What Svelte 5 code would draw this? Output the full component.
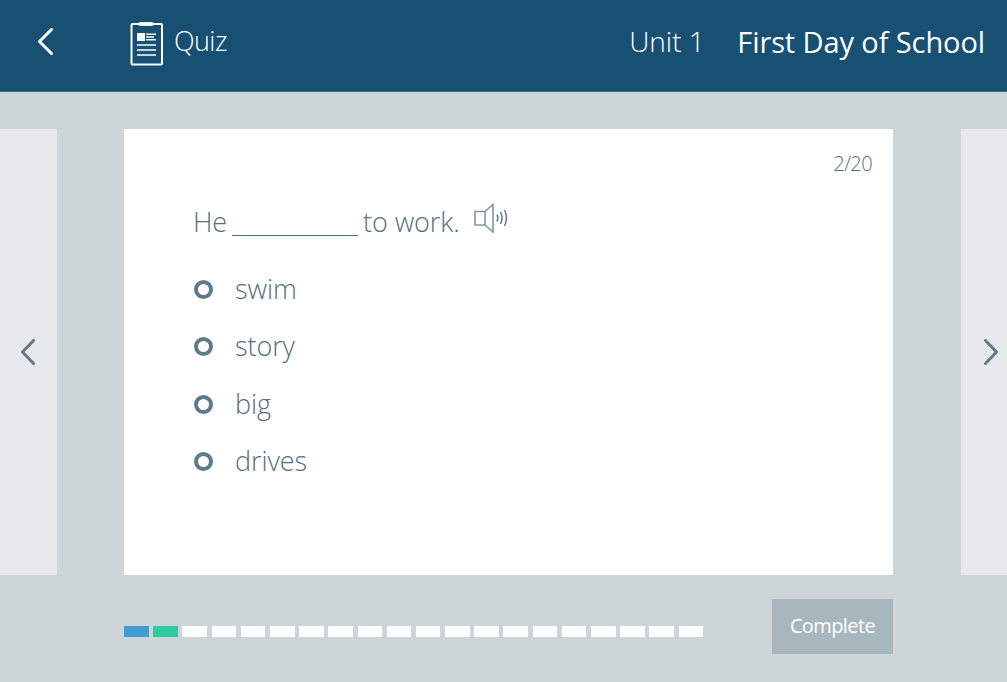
<script>
    const options = ['swim', 'story', 'big', 'drives'];
    const segments = Array.from({ length: 20 }, (_, i) => (i === 0 ? 'blue' : i === 1 ? 'green' : ''));
</script>

<div class="page">
    <header class="top">
        <button class="back" aria-label="Back">
            <svg width="18" height="30" viewBox="0 0 18 30"><path d="M15.5 2.5 L3.5 14.5 L15.5 26.5" fill="none" stroke="#fff" stroke-width="3" stroke-linecap="round" stroke-linejoin="round"/></svg>
        </button>
        <svg class="quiz-icon" width="34" height="44" viewBox="0 0 34 44">
            <rect x="1.5" y="2" width="30.5" height="40.5" rx="1" fill="none" stroke="#fff" stroke-width="2"/>
            <rect x="9" y="0" width="14" height="4" rx="1" fill="#fff" opacity="0.9"/>
            <rect x="7" y="11" width="8" height="8" fill="#fff"/>
            <path d="M16 12.3 H26 M16 15 H24 M16 17.8 H26 M7 23 H26 M7 28 H26 M7 33 H26" stroke="#fff" stroke-width="1.6" fill="none"/>
        </svg>
        <span class="quiz">Quiz</span>
        <span class="unit">Unit 1</span>
        <span class="title">First Day of School</span>
    </header>

    <main class="stage">
        <div class="side left">
            <svg width="16" height="26" viewBox="0 0 16 26"><path d="M13.5 1.5 L2.5 13 L13.5 24.5" fill="none" stroke="#5f7a8a" stroke-width="3" stroke-linecap="round" stroke-linejoin="round"/></svg>
        </div>
        <section class="card">
            <div class="count">2/20</div>
            <div class="question">
                <span>He</span>
                <span class="blank"></span>
                <span>to work.</span>
                <svg class="speaker" width="36" height="30" viewBox="0 0 36 30">
                    <path d="M1 8.5 H11 V22 H1 Z M11 8.5 L19 1.5 V29 L11 22" fill="none" stroke="#7f97a5" stroke-width="1.6"/>
                    <path d="M23 11.5 Q24.8 15 23 18.5 M26.5 9 Q29.5 15 26.5 21 M30.5 7 Q34.5 15 30.5 23" fill="none" stroke="#5f7a8a" stroke-width="1.5"/>
                </svg>
            </div>
            <ul class="options">
                {#each options as option}
                    <li><span class="radio"></span><span class="label">{option}</span></li>
                {/each}
            </ul>
        </section>
        <div class="side right">
            <svg width="16" height="26" viewBox="0 0 16 26"><path d="M2.5 1.5 L13.5 13 L2.5 24.5" fill="none" stroke="#5f7a8a" stroke-width="3" stroke-linecap="round" stroke-linejoin="round"/></svg>
        </div>
    </main>

    <footer class="bottom">
        <div class="progress">
            {#each segments as seg}
                <span class="seg {seg}"></span>
            {/each}
        </div>
        <button class="complete">Complete</button>
    </footer>
</div>

<style>
    :global(body) {
        margin: 0;
        background: #ced5d8;
    }

    .page {
        width: 1007px;
        height: 682px;
        overflow: hidden;
        background: #ced5d8;
        font-family: "Open Sans", "Noto Sans", sans-serif;
    }

    .top {
        height: 92px;
        box-sizing: border-box;
        background: #175072;
        border-bottom: 1px solid #3c6b88;
        color: #fff;
        display: flex;
        align-items: center;
        padding: 0 22px 0 36px;
    }

    .back {
        background: none;
        border: 0;
        padding: 0;
        width: 94px;
        height: 30px;
        margin-top: -8px;
        text-align: left;
    }

    .quiz-icon {
        margin-top: -3px;
    }

    .quiz {
        margin-left: 10px;
        margin-top: -10px;
        font-size: 27px;
        font-weight: 300;
        letter-spacing: -0.6px;
    }

    .unit {
        margin-left: auto;
        font-size: 28px;
        font-weight: 300;
        letter-spacing: 0;
        margin-top: -9px;
    }

    .title {
        margin-left: 32.5px;
        font-size: 29px;
        font-weight: 400;
        letter-spacing: -0.1px;
        margin-top: -9px;
    }

    .stage {
        margin-top: 37px;
        height: 446px;
        display: grid;
        grid-template-columns: 57px 1fr 46px;
    }

    .side {
        background: #e6eaed;
        display: flex;
        align-items: center;
        box-sizing: border-box;
    }

    .side.left {
        padding-left: 20px;
    }

    .side.right {
        padding-left: 22px;
    }

    .card {
        background: #fff;
        color: #557080;
        margin: 0 68px 0 67px;
        padding: 21px 21px 0 69px;
        box-sizing: border-box;
    }

    .count {
        text-align: right;
        font-size: 20px;
        line-height: 28px;
        font-weight: 300;
        letter-spacing: -0.6px;
    }

    .question {
        display: flex;
        align-items: center;
        margin-top: 23px;
        height: 40px;
        font-size: 27px;
        font-weight: 300;
        letter-spacing: -0.1px;
    }

    .blank {
        width: 126px;
        height: 0;
        border-bottom: 1.5px solid #557080;
        margin: 28px 5px 0 5px;
    }

    .speaker {
        margin: -6px 0 0 14px;
    }

    .options {
        list-style: none;
        margin: 20px 0 0;
        padding: 0;
    }

    .options li {
        display: flex;
        align-items: center;
        height: 57.3px;
        font-size: 27px;
        font-weight: 300;
        letter-spacing: -0.1px;
    }

    .label {
        margin-top: -2px;
    }

    .radio {
        width: 19px;
        height: 19px;
        box-sizing: border-box;
        border: 4px solid #5f7a8a;
        border-radius: 50%;
        margin: 0 22px 0 1px;
    }

    .bottom {
        display: flex;
        justify-content: space-between;
        align-items: center;
        margin: 24px 114px 0 124px;
        height: 55px;
    }

    .progress {
        display: flex;
        gap: 4.6px;
        margin-top: 10px;
    }

    .seg {
        width: 24.6px;
        height: 11px;
        background: #fff;
    }

    .seg.blue {
        background: #3f9dd4;
    }

    .seg.green {
        background: #2fc9a2;
    }

    .complete {
        width: 121px;
        height: 55px;
        border: 0;
        background: #a8b7be;
        color: #fff;
        font-family: inherit;
        font-size: 20px;
        letter-spacing: -0.6px;
        padding: 0 0 3px;
    }
</style>
